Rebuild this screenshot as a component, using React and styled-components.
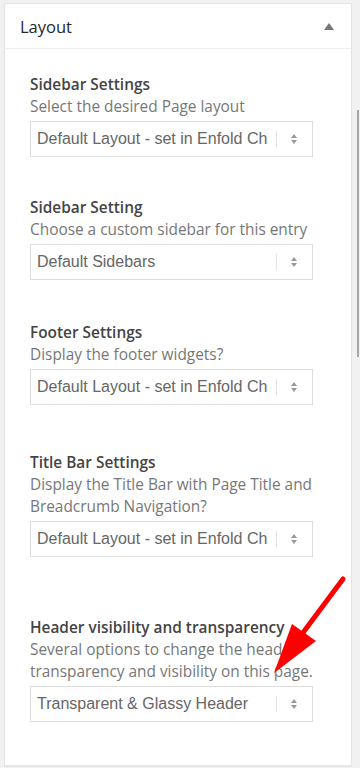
import React from 'react';
import styled, { createGlobalStyle } from 'styled-components';

const GlobalStyle = createGlobalStyle`
  html, body {
    margin: 0;
    padding: 0;
    background: #f1f1f1;
  }
  body {
    font-family: "Open Sans", "Noto Sans", sans-serif;
  }
`;

const Page = styled.div`
  position: relative;
  width: 360px;
  height: 768px;
  overflow: hidden;
  padding: 3px 0 0 4px;
  box-sizing: border-box;
`;

const Panel = styled.div`
  width: 348px;
  height: 763px;
  box-sizing: border-box;
  background: #fff;
  border: 1px solid #e5e5e5;
  box-shadow: 0 1px 1px rgba(0, 0, 0, 0.04);
`;

const Header = styled.div`
  height: 44px;
  display: flex;
  align-items: center;
  justify-content: space-between;
  padding: 0 17px 0 15px;
  border-bottom: 1px solid #eee;
  span {
    font-family: "Open Sans", sans-serif;
    font-size: 16.5px;
    color: #23282d;
  }
`;

const Toggle = styled.div`
  width: 0;
  height: 0;
  border-left: 5px solid transparent;
  border-right: 5px solid transparent;
  border-bottom: 7px solid #72777c;
`;

const Body = styled.div`
  padding: 25px 0 0 25px;
`;

const Field = styled.div`
  margin-bottom: ${(p) => p.gap}px;
`;

const Label = styled.div`
  font-size: 15.4px;
  font-weight: 600;
  color: #444;
  line-height: 22px;
`;

const Desc = styled.div`
  font-size: 15.4px;
  color: #777;
  line-height: 22px;
  width: 292px;
  margin-bottom: 3px;
`;

const Select = styled.div`
  width: 283px;
  height: 36px;
  box-sizing: border-box;
  border: 1px solid #ddd;
  display: flex;
  align-items: center;
  padding-left: 6px;
  font-family: "Liberation Sans", Arial, sans-serif;
  font-size: 16px;
  color: #666;
`;

const Value = styled.div`
  width: 231px;
  overflow: hidden;
  white-space: nowrap;
`;

const Sep = styled.div`
  width: 1px;
  height: 16px;
  background: #e3e3e3;
  margin: 0 13px 0 8px;
`;

const Arrows = styled.svg`
  width: 8px;
  height: 12px;
`;

const Scrollbar = styled.div`
  position: absolute;
  right: 1px;
  top: 110px;
  width: 2px;
  height: 247px;
  background: #a8a8a8;
`;

const Pointer = styled.svg`
  position: absolute;
  left: 0;
  top: 0;
  pointer-events: none;
`;

const fields = [
  {
    label: 'Sidebar Settings',
    desc: 'Select the desired Page layout',
    value: 'Default Layout - set in Enfold Child > Sidebar Options',
    gap: 40,
  },
  {
    label: 'Sidebar Setting',
    desc: 'Choose a custom sidebar for this entry',
    value: 'Default Sidebars',
    gap: 42,
  },
  {
    label: 'Footer Settings',
    desc: 'Display the footer widgets?',
    value: 'Default Layout - set in Enfold Child > Footer',
    gap: 47,
  },
  {
    label: 'Title Bar Settings',
    desc: 'Display the Title Bar with Page Title and Breadcrumb Navigation?',
    value: 'Default Layout - set in Enfold Child > Header',
    gap: 60,
  },
  {
    label: 'Header visibility and transparency',
    desc: 'Several options to change the header transparency and visibility on this page.',
    value: 'Transparent & Glassy Header',
    gap: 0,
  },
];

function UpDown() {
  return (
    <Arrows viewBox="0 0 8 12">
      <path d="M4 1 L7 5 H1 Z" fill="#999" />
      <path d="M4 11 L7 7 H1 Z" fill="#999" />
    </Arrows>
  );
}

export default function App() {
  return (
    <Page>
      <GlobalStyle />
      <Panel>
        <Header>
          <span>Layout</span>
          <Toggle />
        </Header>
        <Body>
          {fields.map((f) => (
            <Field key={f.label} gap={f.gap}>
              <Label>{f.label}</Label>
              <Desc>{f.desc}</Desc>
              <Select>
                <Value>{f.value}</Value>
                <Sep />
                <UpDown />
              </Select>
            </Field>
          ))}
        </Body>
      </Panel>
      <Scrollbar />
      <Pointer width="360" height="768" viewBox="0 0 360 768">
        <line x1="343" y1="579" x2="302" y2="634" stroke="#f00" strokeWidth="5" strokeLinecap="round" />
        <path d="M292 624 L316 641 L274 673 Z" fill="#f00" />
      </Pointer>
    </Page>
  );
}
